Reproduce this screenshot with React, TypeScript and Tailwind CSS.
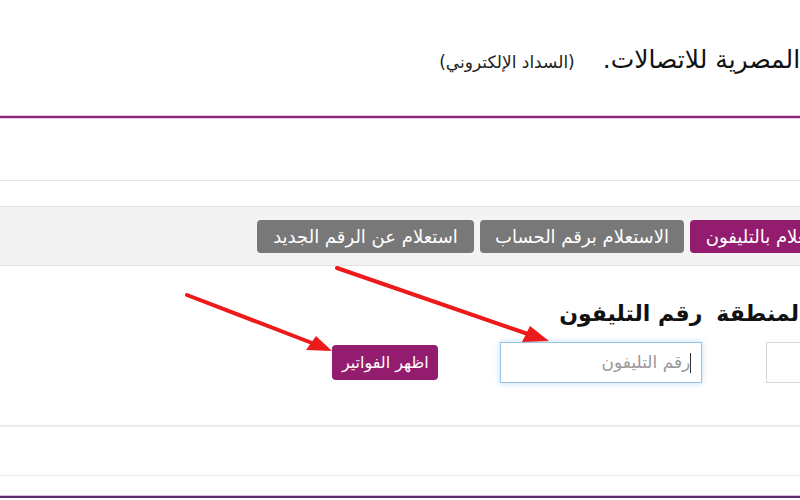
const FONT = "font-['DejaVu_Sans',sans-serif]";

function Arrows() {
    return (
        <svg className="pointer-events-none absolute inset-0" width="800" height="500" viewBox="0 0 800 500">
            <g stroke="#ec1a1a" strokeWidth="4" strokeLinecap="round">
                <line x1="187" y1="295" x2="312" y2="343" />
                <line x1="337" y1="268" x2="528" y2="334" />
            </g>
            <g fill="#ec1a1a">
                <polygon points="332,351 306,350 316,336" />
                <polygon points="549,341 522,342 530,326" />
            </g>
        </svg>
    );
}

export default function App() {
    return (
        <div dir="rtl" className={`relative h-[500px] w-[800px] overflow-hidden bg-white text-[#222] ${FONT}`}>
            <header className="flex h-[116px] items-center">
                <div className="-mr-[84px] flex items-baseline gap-[28px] pt-[4px]">
                    <h1 className="whitespace-nowrap text-[25px] text-[#111]">الشركة المصرية للاتصالات.</h1>
                    <span className="whitespace-nowrap text-[17px] text-[#222]">(السداد الإلكتروني)</span>
                </div>
            </header>
            <div className="h-[2px] bg-[#7e2b70] shadow-[0_1px_0_#f3c9eb,0_-1px_0_#f3c9eb]" />
            <div className="h-[62px]" />
            <div className="h-px bg-[#e4e4e4]" />
            <div className="h-[25px]" />

            <nav className="flex h-[60px] items-center border-y border-[#e2e2e2] bg-[#f3f3f3]">
                <div className="-mr-[52px] flex gap-[6px] text-[18px] text-white">
                    <button className="h-[33px] w-[162px] whitespace-nowrap rounded-[4px] bg-[#931c6e] pl-[6px]">الاستعلام بالتليفون</button>
                    <button className="h-[33px] w-[204px] whitespace-nowrap rounded-[4px] bg-[#787878]">الاستعلام برقم الحساب</button>
                    <button className="h-[33px] w-[217px] whitespace-nowrap rounded-[4px] bg-[#787878]">استعلام عن الرقم الجديد</button>
                </div>
            </nav>

            <section className="flex items-end pt-[31px]">
                <div className="-mr-[52px] flex flex-col items-start gap-[12px]">
                    <label className="whitespace-nowrap text-[22px] font-bold text-[#111]">كود المنطقة</label>
                    <div className="h-[41px] w-[86px] border border-[#d6d6d6] bg-white" />
                </div>
                <div className="mr-[14px] flex flex-col items-start gap-[12px]">
                    <label className="whitespace-nowrap text-[22px] font-bold text-[#111]">رقم التليفون</label>
                    <div className="flex h-[41px] w-[202px] items-center border border-[#9cc3e4] bg-white px-[10px] text-[17px] text-[#999] shadow-[0_0_6px_rgba(102,175,233,0.45)]">
                        <span className="h-[20px] w-px bg-[#333]" />
                        <span>رقم التليفون</span>
                    </div>
                </div>
                <div className="mr-[62px] pb-[3px]">
                    <button className="h-[35px] w-[106px] whitespace-nowrap rounded-[4px] bg-[#931c6e] text-[16px] text-white">اظهر الفواتير</button>
                </div>
            </section>

            <div className="h-[42px]" />
            <div className="h-px bg-[#e6e6e6] shadow-[0_1px_1px_#efefef]" />
            <div className="h-[49px]" />
            <div className="h-px bg-[#e8e8e8]" />
            <div className="h-[19px]" />
            <div className="h-[3px] border-t border-[#d9c2e3] bg-[#5d2a6c]" />

            <Arrows />
        </div>
    );
}
